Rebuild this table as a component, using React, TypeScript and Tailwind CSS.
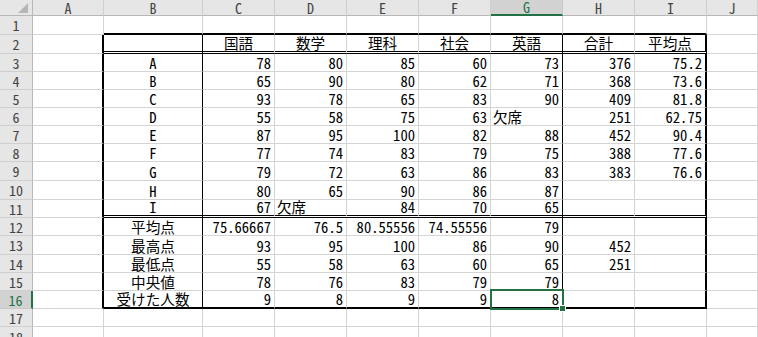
import React from "react";

const FONT = '"Noto Sans Mono CJK JP", "Noto Sans CJK JP", "Liberation Mono", monospace';

const COLS = ["A", "B", "C", "D", "E", "F", "G", "H", "I", "J"];
const ROW_H = [19, 19, 18, 18, 18, 18, 18, 18, 19, 19, 18, 18, 19, 18, 18, 18, 18, 20];

type V = string | number | null;
// rows 2..16, columns B..I
const TABLE: V[][] = [
  ["", "国語", "数学", "理科", "社会", "英語", "合計", "平均点"],
  ["A", 78, 80, 85, 60, 73, 376, 75.2],
  ["B", 65, 90, 80, 62, 71, 368, 73.6],
  ["C", 93, 78, 65, 83, 90, 409, 81.8],
  ["D", 55, 58, 75, 63, "欠席", 251, 62.75],
  ["E", 87, 95, 100, 82, 88, 452, 90.4],
  ["F", 77, 74, 83, 79, 75, 388, 77.6],
  ["G", 79, 72, 63, 86, 83, 383, 76.6],
  ["H", 80, 65, 90, 86, 87, null, null],
  ["I", 67, "欠席", 84, 70, 65, null, null],
  ["平均点", "75.66667", 76.5, "80.55556", "74.55556", 79, null, null],
  ["最高点", 93, 95, 100, 86, 90, 452, null],
  ["最低点", 55, 58, 63, 60, 65, 251, null],
  ["中央値", 78, 76, 83, 79, 79, null, null],
  ["受けた人数", 9, 8, 9, 9, 8, null, null],
];

function getValue(r: number, c: number): V {
  if (r < 2 || r > 16 || c < 1 || c > 8) return null;
  return TABLE[r - 2][c - 1];
}

function rightBorder(r: number, c: number): string {
  const inT = r >= 2 && r <= 16;
  if (inT && (c === 0 || c === 8)) return "border-r-2 border-r-black";
  if (inT && (c === 1 || c === 6)) return "border-r border-r-black";
  return "border-r border-r-[#d4d4d4]";
}

function bottomBorder(r: number, c: number): string {
  const inC = c >= 1 && c <= 8;
  if (inC && (r === 1 || r === 16)) return "border-b-2 border-b-black";
  if (inC && (r === 2 || r === 11)) return "border-b-[3px] border-double border-b-black";
  return "border-b border-b-[#d4d4d4]";
}

function Cell({ r, c }: { r: number; c: number }) {
  const v = getValue(r, c);
  let align = "justify-end pr-[3px]";
  if (typeof v === "string" && v !== "" && (c === 1 || r === 2)) align = "justify-center";
  else if (v === "欠席") align = "justify-start pl-[2px]";
  const selected = r === 16 && c === 6;
  return (
    <div
      className={`relative flex items-end pb-0 bg-white text-black whitespace-nowrap overflow-visible ${align} ${rightBorder(r, c)} ${bottomBorder(r, c)}`}
    >
      {v !== null && v !== "" ? <span className="leading-none">{String(v)}</span> : null}
      {selected ? (
        <div className="absolute -left-[1px] -top-[2px] -right-[2px] -bottom-[3px] z-10 border-2 border-[#217346]">
          <div className="absolute -right-[4px] -bottom-[4px] w-[7px] h-[7px] bg-[#217346] border border-white" />
        </div>
      ) : null}
    </div>
  );
}

export default function App() {
  return (
    <div
      className="w-[758px] h-[337px] overflow-hidden bg-white text-[14.6px]"
      style={{ fontFamily: FONT }}
    >
      <div className="grid grid-cols-[33px_71px_99px_72px_72px_72px_72px_72px_72px_72px_1fr] grid-rows-[16px_19px_19px_18px_18px_18px_18px_18px_18px_19px_19px_18px_18px_19px_18px_18px_18px_18px_20px]">
        {/* corner */}
        <div className="relative bg-[#e6e6e6] border-r border-r-[#b8b8b8] border-b border-b-[#b8b8b8]">
          <svg className="absolute left-[17px] top-[3px]" width="12" height="11" viewBox="0 0 12 11">
            <polygon points="11,0 11,10 1,10" fill="#b5b5b5" />
          </svg>
        </div>
        {COLS.map((col, i) =>
          i === 6 ? (
            <div
              key={col}
              className="flex items-center justify-center bg-[#d2d2d2] text-[#217346] border-r border-r-[#c8c8c8] border-b-2 border-b-[#217346] leading-none text-[14px]"
            >
              {col}
            </div>
          ) : (
            <div
              key={col}
              className="flex items-center justify-center bg-[#e6e6e6] text-[#444444] border-r border-r-[#cfcfcf] border-b border-b-[#b8b8b8] leading-none text-[14px]"
            >
              {col}
            </div>
          )
        )}
        {ROW_H.map((_, idx) => {
          const r = idx + 1;
          return (
            <React.Fragment key={r}>
              {r === 16 ? (
                <div className="flex items-center justify-center bg-[#d2d2d2] text-[#217346] border-r-2 border-r-[#217346] border-b border-b-[#c8c8c8] leading-none text-[14px]">
                  {r}
                </div>
              ) : (
                <div className="flex items-center justify-center bg-[#e6e6e6] text-[#444444] border-r border-r-[#b8b8b8] border-b border-b-[#cfcfcf] leading-none text-[14px]">
                  {r}
                </div>
              )}
              {COLS.map((col, c) => (
                <Cell key={col} r={r} c={c} />
              ))}
            </React.Fragment>
          );
        })}
      </div>
    </div>
  );
}
